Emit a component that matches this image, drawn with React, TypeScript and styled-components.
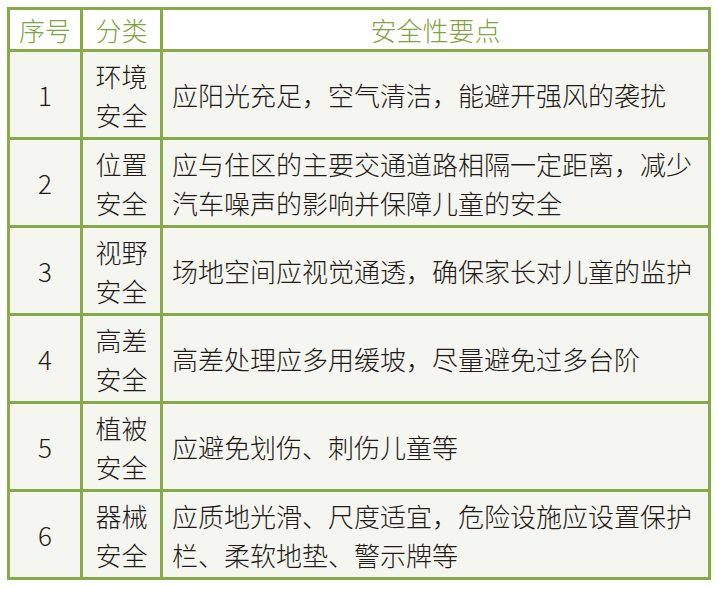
import React from 'react';
import styled, { createGlobalStyle } from 'styled-components';

const GlobalStyle = createGlobalStyle`
    html, body {
        margin: 0;
        padding: 0;
        background: #ffffff;
    }
    body {
        font-family: "Noto Sans CJK SC", "Noto Sans", sans-serif;
    }
`;

const Page = styled.div`
    padding: 7px;
`;

const Table = styled.table`
    width: 704px;
    table-layout: fixed;
    border-collapse: collapse;
    border: 3px solid #86aa48;
    font-size: 26px;
    font-weight: 300;
    line-height: 39px;
    color: #1f1a17;
`;

const HeadCell = styled.th`
    border: 3px solid #86aa48;
    background: #ffffff;
    color: #7fa43f;
    font-weight: 300;
    height: 39px;
    padding: 0;
    text-align: center;
    vertical-align: middle;
`;

const Cell = styled.td<{ $align?: 'left' | 'center' }>`
    border: 3px solid #86aa48;
    background: #f5f6f0;
    height: 85px;
    padding: 0 ${props => props.$align === 'left' ? '8px 0 9px' : '0'};
    text-align: ${props => props.$align === 'left' ? 'left' : 'center'};
    vertical-align: middle;
`;

const Category = styled.span`
    display: inline-block;
    width: 52px;
    word-break: break-all;
`;

interface Row {
    no: number;
    category: string;
    point: string;
}

const rows: Row[] = [
    { no: 1, category: '环境安全', point: '应阳光充足，空气清洁，能避开强风的袭扰' },
    { no: 2, category: '位置安全', point: '应与住区的主要交通道路相隔一定距离，减少汽车噪声的影响并保障儿童的安全' },
    { no: 3, category: '视野安全', point: '场地空间应视觉通透，确保家长对儿童的监护' },
    { no: 4, category: '高差安全', point: '高差处理应多用缓坡，尽量避免过多台阶' },
    { no: 5, category: '植被安全', point: '应避免划伤、刺伤儿童等' },
    { no: 6, category: '器械安全', point: '应质地光滑、尺度适宜，危险设施应设置保护栏、柔软地垫、警示牌等' },
];

const App: React.FC = () => {
    return (
        <Page>
            <GlobalStyle />
            <Table>
                <colgroup>
                    <col style={{ width: 73 }} />
                    <col style={{ width: 80 }} />
                    <col />
                </colgroup>
                <thead>
                    <tr>
                        <HeadCell>序号</HeadCell>
                        <HeadCell>分类</HeadCell>
                        <HeadCell>安全性要点</HeadCell>
                    </tr>
                </thead>
                <tbody>
                    {rows.map(row => (
                        <tr key={row.no}>
                            <Cell>{row.no}</Cell>
                            <Cell><Category>{row.category}</Category></Cell>
                            <Cell $align="left">{row.point}</Cell>
                        </tr>
                    ))}
                </tbody>
            </Table>
        </Page>
    );
};

export default App;
